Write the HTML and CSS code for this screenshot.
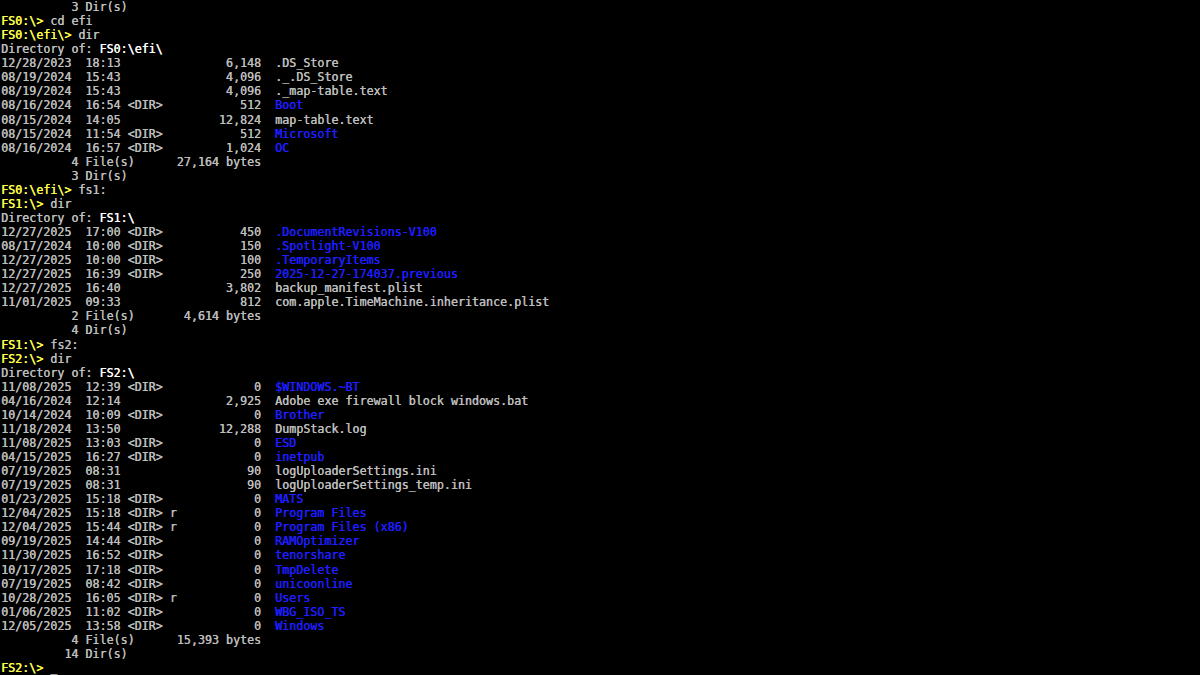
FILE: index.html
```html
<!DOCTYPE html>
<html lang="en">
<head>
    <meta charset="UTF-8">
    <meta name="viewport" content="width=device-width, initial-scale=1.0">
    <title>UEFI Shell</title>
    <link rel="stylesheet" href="styles.css">
</head>
<body>
<pre class="console">          3 Dir(s)
<span class="prompt">FS0:\&gt;</span> cd efi
<span class="prompt">FS0:\efi\&gt;</span> dir
Directory of: <span class="hi">FS0:\efi\</span>
12/28/2023  18:13               6,148  .DS_Store
08/19/2024  15:43               4,096  ._.DS_Store
08/19/2024  15:43               4,096  ._map-table.text
08/16/2024  16:54 &lt;DIR&gt;           512  <span class="dir">Boot</span>
08/15/2024  14:05              12,824  map-table.text
08/15/2024  11:54 &lt;DIR&gt;           512  <span class="dir">Microsoft</span>
08/16/2024  16:57 &lt;DIR&gt;         1,024  <span class="dir">OC</span>
          4 File(s)      27,164 bytes
          3 Dir(s)
<span class="prompt">FS0:\efi\&gt;</span> fs1:
<span class="prompt">FS1:\&gt;</span> dir
Directory of: <span class="hi">FS1:\</span>
12/27/2025  17:00 &lt;DIR&gt;           450  <span class="dir">.DocumentRevisions-V100</span>
08/17/2024  10:00 &lt;DIR&gt;           150  <span class="dir">.Spotlight-V100</span>
12/27/2025  10:00 &lt;DIR&gt;           100  <span class="dir">.TemporaryItems</span>
12/27/2025  16:39 &lt;DIR&gt;           250  <span class="dir">2025-12-27-174037.previous</span>
12/27/2025  16:40               3,802  backup_manifest.plist
11/01/2025  09:33                 812  com.apple.TimeMachine.inheritance.plist
          2 File(s)       4,614 bytes
          4 Dir(s)
<span class="prompt">FS1:\&gt;</span> fs2:
<span class="prompt">FS2:\&gt;</span> dir
Directory of: <span class="hi">FS2:\</span>
11/08/2025  12:39 &lt;DIR&gt;             0  <span class="dir">$WINDOWS.~BT</span>
04/16/2024  12:14               2,925  Adobe exe firewall block windows.bat
10/14/2024  10:09 &lt;DIR&gt;             0  <span class="dir">Brother</span>
11/18/2024  13:50              12,288  DumpStack.log
11/08/2025  13:03 &lt;DIR&gt;             0  <span class="dir">ESD</span>
04/15/2025  16:27 &lt;DIR&gt;             0  <span class="dir">inetpub</span>
07/19/2025  08:31                  90  logUploaderSettings.ini
07/19/2025  08:31                  90  logUploaderSettings_temp.ini
01/23/2025  15:18 &lt;DIR&gt;             0  <span class="dir">MATS</span>
12/04/2025  15:18 &lt;DIR&gt; r           0  <span class="dir">Program Files</span>
12/04/2025  15:44 &lt;DIR&gt; r           0  <span class="dir">Program Files (x86)</span>
09/19/2025  14:44 &lt;DIR&gt;             0  <span class="dir">RAMOptimizer</span>
11/30/2025  16:52 &lt;DIR&gt;             0  <span class="dir">tenorshare</span>
10/17/2025  17:18 &lt;DIR&gt;             0  <span class="dir">TmpDelete</span>
07/19/2025  08:42 &lt;DIR&gt;             0  <span class="dir">unicoonline</span>
10/28/2025  16:05 &lt;DIR&gt; r           0  <span class="dir">Users</span>
01/06/2025  11:02 &lt;DIR&gt;             0  <span class="dir">WBG_ISO_TS</span>
12/05/2025  13:58 &lt;DIR&gt;             0  <span class="dir">Windows</span>
          4 File(s)      15,393 bytes
         14 Dir(s)
<span class="prompt">FS2:\&gt;</span> <span class="cursor">_</span></pre>
</body>
</html>
```

FILE: styles.css
```css
html,
body{
    margin: 0;
    height: 100%;
    background: #000;
    overflow: hidden;
}
/* shell output, 80 col grid */
.console{
    margin: 0;
    padding: 0 0 0 1px;
    font-family: "DejaVu Sans Mono", "Liberation Mono", monospace;
    font-size: 11.68px;
    line-height: 14.06px;
    color: #bdbdbd;
    white-space: pre;
    /* bitmap font look: a bit heavier strokes */
    text-shadow: 0.4px 0 0;
}
.prompt{
    color: #ffff4a;
}
.hi{
    color: #ffffff;
}
.dir{
    color: #1e1eff;
}
.cursor{
    color: #bdbdbd;
}
```
